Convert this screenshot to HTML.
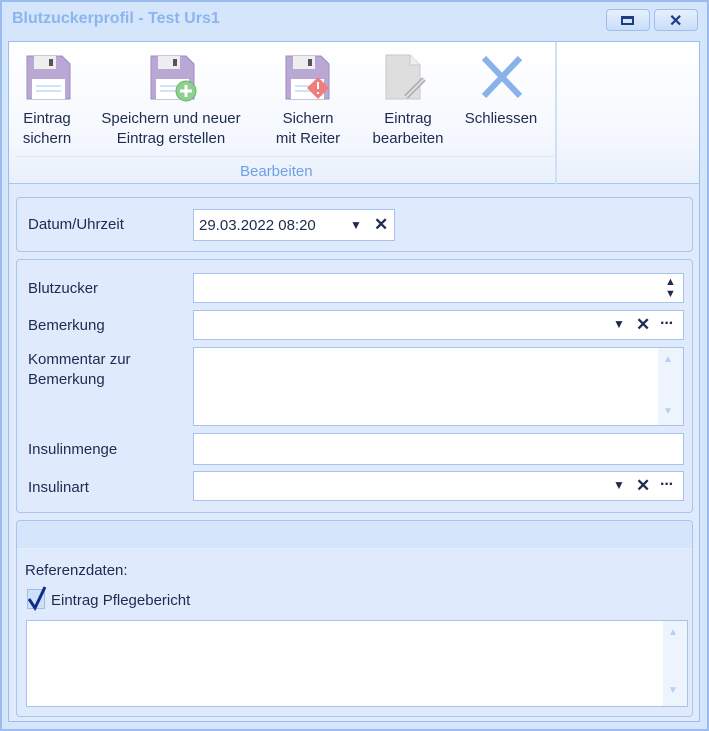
<!DOCTYPE html>
<html><head><style>
*{box-sizing:border-box;margin:0;padding:0}
body{width:709px;height:731px;background:#fff;font-family:"Liberation Sans",sans-serif;font-size:14px;color:#1e2b4f;position:relative;overflow:hidden}
.abs{position:absolute}
#win{left:0;top:0;width:709px;height:731px;background:#d5e5fb;border:2px solid #99bdee}
.title{left:12px;top:10px;font-weight:bold;font-size:16px;color:#8ab6ee}
.tb{top:9px;width:44px;height:22px;border:1px solid #9ebfeb;border-radius:4px;background:linear-gradient(#e6f0fd,#cadef8)}
#content{left:8px;top:41px;width:692px;height:681px;background:#dfebfc;border:1px solid #9abdec}
#ribbon{left:9px;top:42px;width:690px;height:142px;background:linear-gradient(#fff,#f4f8fe 70%,#e8f0fc);border-bottom:1px solid #a9c6ee}
.lbl{text-align:center;line-height:20px;font-size:15px}
.panel{border:1px solid #a7c5ee;border-radius:4px;background:#dfebfc}
.inp{background:#fff;border:1px solid #a6c3ec}
.fl{left:28px;font-size:15px}
.dd{font-size:12px;top:6px}
.x{font-weight:bold;font-size:17px;top:4px}
.dots{font-weight:bold;top:5px;font-size:16px;line-height:16px;letter-spacing:-1px}
</style></head><body>
<div id="win" class="abs"></div>
<div class="abs title">Blutzuckerprofil - Test Urs1</div>
<div class="abs tb" style="left:606px"><div class="abs" style="left:14px;top:6px;width:13px;height:9px;border:2px solid #1f3c8a;border-top-width:3px"></div></div>
<div class="abs tb" style="left:654px"><div class="abs" style="left:14px;top:1px;font-weight:bold;font-size:16px;color:#1f3c8a">✕</div></div>
<div id="content" class="abs"></div>
<div id="ribbon" class="abs"></div>
<div class="abs" style="left:555px;top:42px;width:2px;height:142px;background:#cfe0f6"></div>
<div class="abs" style="left:16px;top:156px;width:538px;height:1px;background:#d8e5f7"></div>

<svg class="abs" style="left:24px;top:53px" width="48" height="48" viewBox="0 0 48 48">
<path d="M3 3H38L46 11V46H3Z" fill="#b9a8d4" stroke="#9d8cc0"/><rect x="10" y="3" width="22" height="13" fill="#eee"/><rect x="25" y="6" width="4" height="7" fill="#555"/><rect x="8" y="26" width="33" height="20" fill="#fff"/><path d="M12 33H37M12 38H37" stroke="#9fc8ef"/></svg>
<svg class="abs" style="left:148px;top:53px" width="52" height="50" viewBox="0 0 52 50">
<path d="M3 3H38L46 11V46H3Z" fill="#b9a8d4" stroke="#9d8cc0"/><rect x="10" y="3" width="22" height="13" fill="#eee"/><rect x="25" y="6" width="4" height="7" fill="#555"/><rect x="8" y="26" width="33" height="20" fill="#fff"/><path d="M12 33H37M12 38H37" stroke="#9fc8ef"/><circle cx="38" cy="38" r="10" fill="#8fcf8f" stroke="#6cb36c"/><path d="M38 32V44M32 38H44" stroke="#fff" stroke-width="3"/></svg>
<svg class="abs" style="left:283px;top:53px" width="50" height="48" viewBox="0 0 50 48">
<path d="M3 3H38L46 11V46H3Z" fill="#b9a8d4" stroke="#9d8cc0"/><rect x="10" y="3" width="22" height="13" fill="#eee"/><rect x="25" y="6" width="4" height="7" fill="#555"/><rect x="8" y="26" width="33" height="20" fill="#fff"/><path d="M12 33H37M12 38H37" stroke="#9fc8ef"/><path d="M35 24L46 35L35 46L24 35Z" fill="#ef7d7d"/><path d="M35 29V36M35 39V41" stroke="#fff" stroke-width="2"/></svg>
<svg class="abs" style="left:384px;top:53px" width="46" height="48" viewBox="0 0 46 48">
<path d="M2 2H26L36 12V46H2Z" fill="#dedede" stroke="#c8c8c8"/><path d="M26 2V12H36" fill="#eee" stroke="#c8c8c8"/><path d="M22 44L40 26" stroke="#aaa" stroke-width="5"/><path d="M22 44L40 26" stroke="#ddd" stroke-width="2"/></svg>
<svg class="abs" style="left:480px;top:56px" width="44" height="42" viewBox="0 0 44 42"><path d="M4 2L40 40M40 2L4 40" stroke="#8ab2ea" stroke-width="6"/></svg>

<div class="abs lbl" style="left:10px;top:109px;width:74px">Eintrag<br>sichern</div>
<div class="abs lbl" style="left:88px;top:109px;width:166px">Speichern und neuer<br>Eintrag erstellen</div>
<div class="abs lbl" style="left:266px;top:109px;width:84px">Sichern<br>mit Reiter</div>
<div class="abs lbl" style="left:366px;top:109px;width:84px">Eintrag<br>bearbeiten</div>
<div class="abs lbl" style="left:458px;top:109px;width:86px">Schliessen</div>
<div class="abs" style="left:240px;top:163px;color:#6da1e6;font-size:15px">Bearbeiten</div>

<div class="abs panel" style="left:16px;top:197px;width:677px;height:55px"></div>
<div class="abs fl" style="top:216px">Datum/Uhrzeit</div>
<div class="abs inp" style="left:193px;top:209px;width:202px;height:32px"><span class="abs" style="left:5px;top:7px;font-size:15px">29.03.2022 08:20</span><span class="abs dd" style="left:156px;top:8px">▼</span><span class="abs x" style="left:180px;top:5px">✕</span></div>

<div class="abs panel" style="left:16px;top:259px;width:677px;height:254px"></div>
<div class="abs fl" style="top:280px">Blutzucker</div>
<div class="abs inp" style="left:193px;top:273px;width:491px;height:30px"><span class="abs" style="left:471px;top:2px;font-size:11px;line-height:12px">▲<br>▼</span></div>
<div class="abs fl" style="top:317px">Bemerkung</div>
<div class="abs inp" style="left:193px;top:310px;width:491px;height:30px"><span class="abs dd" style="left:419px">▼</span><span class="abs x" style="left:442px">✕</span><span class="abs dots" style="left:466px">···</span></div>
<div class="abs fl" style="top:350px;line-height:20px">Kommentar zur<br>Bemerkung</div>
<div class="abs inp" style="left:193px;top:347px;width:491px;height:79px"><div class="abs" style="left:464px;top:0;width:25px;height:77px;background:#eef4fe"></div><span class="abs" style="left:469px;top:6px;font-size:10px;color:#b6cff2">▲</span><span class="abs" style="left:469px;top:58px;font-size:10px;color:#b6cff2">▼</span></div>
<div class="abs fl" style="top:441px">Insulinmenge</div>
<div class="abs inp" style="left:193px;top:433px;width:491px;height:32px"></div>
<div class="abs fl" style="top:479px">Insulinart</div>
<div class="abs inp" style="left:193px;top:471px;width:491px;height:30px"><span class="abs dd" style="left:419px">▼</span><span class="abs x" style="left:442px">✕</span><span class="abs dots" style="left:466px">···</span></div>

<div class="abs panel" style="left:16px;top:520px;width:677px;height:197px"></div>
<div class="abs" style="left:17px;top:521px;width:675px;height:28px;background:#d4e5fc;border-bottom:1px solid #e6eefc;border-radius:4px 4px 0 0"></div>
<div class="abs" style="left:25px;top:562px;font-size:15px">Referenzdaten:</div>
<div class="abs" style="left:27px;top:589px;width:18px;height:20px;background:#cfe0f8;border:1px solid #9dbde9"></div>
<svg class="abs" style="left:26px;top:585px" width="22" height="26" viewBox="0 0 22 26"><path d="M3 14L9 23L19 2" fill="none" stroke="#0d2f8a" stroke-width="3"/></svg>
<div class="abs" style="left:51px;top:592px;font-size:15px">Eintrag Pflegebericht</div>
<div class="abs inp" style="left:26px;top:620px;width:662px;height:87px"><div class="abs" style="left:636px;top:0;width:24px;height:85px;background:#eef4fe"></div><span class="abs" style="left:641px;top:6px;font-size:10px;color:#b6cff2">▲</span><span class="abs" style="left:641px;top:64px;font-size:10px;color:#b6cff2">▼</span></div>
</body></html>
